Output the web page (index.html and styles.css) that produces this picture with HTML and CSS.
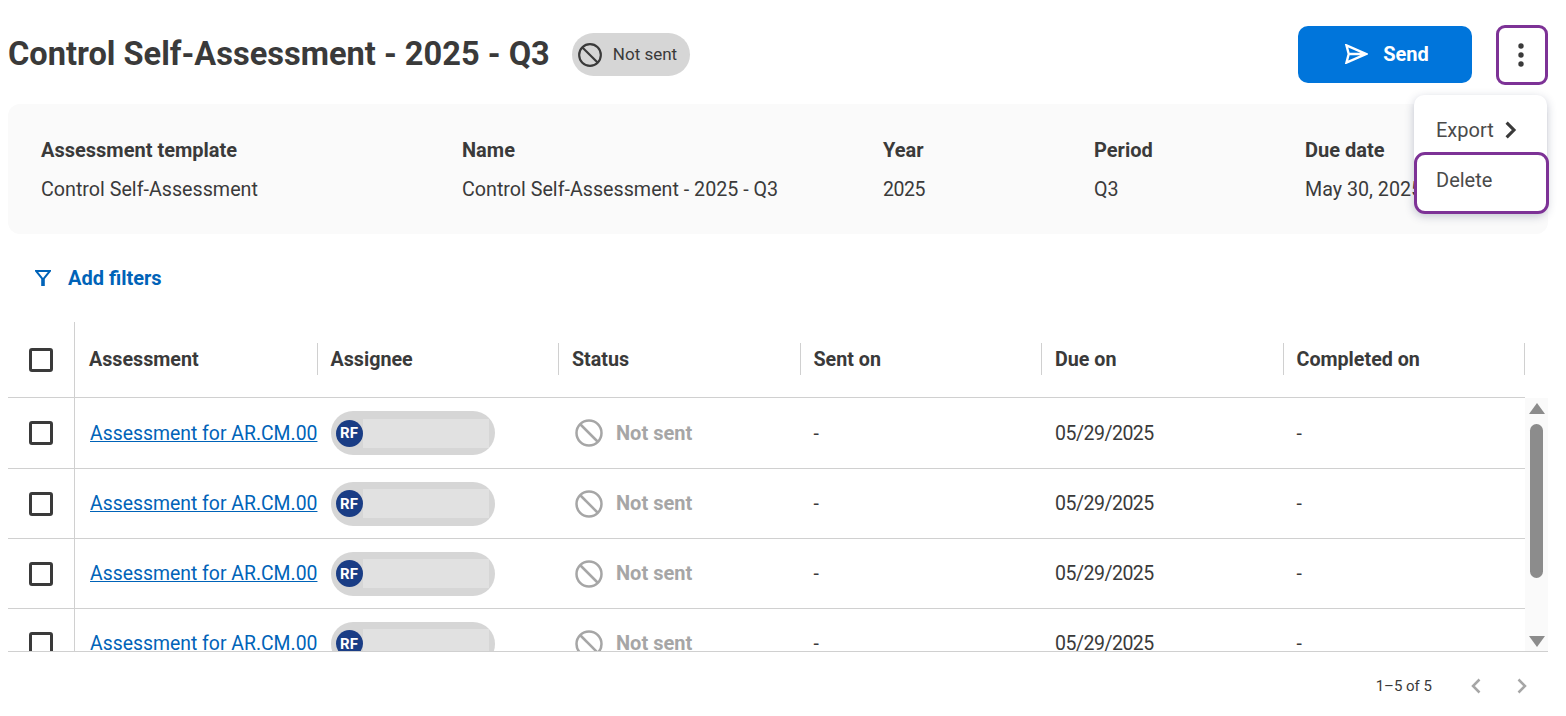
FILE: index.html
```html
<!DOCTYPE html>
<html lang="en">
<head>
<meta charset="utf-8">
<title>Control Self-Assessment - 2025 - Q3</title>
<link rel="stylesheet" href="styles.css">
</head>
<body>
<div class="page">
  <header class="top">
    <h1 class="title">Control Self-Assessment - 2025 - Q3</h1>
    <span class="badge">
      <svg class="ban" viewBox="0 0 24 24"><circle cx="12" cy="12" r="10"/><path d="M5 5l14 14"/></svg>
      <span class="badge-text">Not sent</span>
    </span>
    <div class="actions">
      <button class="send">
        <svg class="plane" viewBox="0 0 26 22"><path d="M2.500 1.500L24 11 2.500 20.500 5 11zM5 11H24"/></svg>
        <span>Send</span>
      </button>
      <button class="more" aria-label="More">
        <svg viewBox="0 0 6 24" class="dots"><circle cx="3" cy="3" r="2.700"/><circle cx="3" cy="12" r="2.700"/><circle cx="3" cy="21" r="2.700"/></svg>
      </button>
      <div class="menu">
        <div class="menu-item export">Export
          <svg class="chev" viewBox="0 0 11 16"><path d="M2.500 1.500L9 8l-6.500 6.500"/></svg>
        </div>
        <div class="menu-item delete">Delete</div>
      </div>
    </div>
  </header>

  <section class="info">
    <div class="info-col"><strong>Assessment template</strong><span>Control Self-Assessment</span></div>
    <div class="info-col"><strong>Name</strong><span>Control Self-Assessment - 2025 - Q3</span></div>
    <div class="info-col"><strong>Year</strong><span class="num">2025</span></div>
    <div class="info-col"><strong>Period</strong><span>Q3</span></div>
    <div class="info-col"><strong>Due date</strong><span>May 30, 2025</span></div>
  </section>

  <div class="filters">
    <svg class="funnel" viewBox="0 0 16 16"><path d="M1 1H15L8.800 8.500V15H7.200V8.500Z"/></svg>
    <span>Add filters</span>
  </div>

  <div class="table">
    <div class="row head">
      <div class="cell check"><i class="box"></i></div>
      <div class="cell th">Assessment</div>
      <div class="cell th">Assignee</div>
      <div class="cell th">Status</div>
      <div class="cell th">Sent on</div>
      <div class="cell th">Due on</div>
      <div class="cell th">Completed on</div>
    </div>
    <div class="body">
      <div class="rows">
        <div class="row">
          <div class="cell check"><i class="box"></i></div>
          <div class="cell"><a href="#">Assessment for AR.CM.00</a></div>
          <div class="cell"><span class="pill"><span class="avatar">RF</span><span class="redact"></span></span></div>
          <div class="cell status"><svg class="ban" viewBox="0 0 24 24"><circle cx="12" cy="12" r="10"/><path d="M5 5l14 14"/></svg><b>Not sent</b></div>
          <div class="cell">-</div>
          <div class="cell num">05/29/2025</div>
          <div class="cell">-</div>
        </div>
        <div class="row">
          <div class="cell check"><i class="box"></i></div>
          <div class="cell"><a href="#">Assessment for AR.CM.00</a></div>
          <div class="cell"><span class="pill"><span class="avatar">RF</span><span class="redact"></span></span></div>
          <div class="cell status"><svg class="ban" viewBox="0 0 24 24"><circle cx="12" cy="12" r="10"/><path d="M5 5l14 14"/></svg><b>Not sent</b></div>
          <div class="cell">-</div>
          <div class="cell num">05/29/2025</div>
          <div class="cell">-</div>
        </div>
        <div class="row">
          <div class="cell check"><i class="box"></i></div>
          <div class="cell"><a href="#">Assessment for AR.CM.00</a></div>
          <div class="cell"><span class="pill"><span class="avatar">RF</span><span class="redact"></span></span></div>
          <div class="cell status"><svg class="ban" viewBox="0 0 24 24"><circle cx="12" cy="12" r="10"/><path d="M5 5l14 14"/></svg><b>Not sent</b></div>
          <div class="cell">-</div>
          <div class="cell num">05/29/2025</div>
          <div class="cell">-</div>
        </div>
        <div class="row">
          <div class="cell check"><i class="box"></i></div>
          <div class="cell"><a href="#">Assessment for AR.CM.00</a></div>
          <div class="cell"><span class="pill"><span class="avatar">RF</span><span class="redact"></span></span></div>
          <div class="cell status"><svg class="ban" viewBox="0 0 24 24"><circle cx="12" cy="12" r="10"/><path d="M5 5l14 14"/></svg><b>Not sent</b></div>
          <div class="cell">-</div>
          <div class="cell num">05/29/2025</div>
          <div class="cell">-</div>
        </div>
      </div>
      <div class="rail">
        <i class="arrow up"></i>
        <i class="thumb"></i>
        <i class="arrow down"></i>
      </div>
    </div>
  </div>

  <footer class="pager">
    <span>1–5 of 5</span>
    <svg class="page-chev" viewBox="0 0 12 18"><path d="M9.500 2.500L3 9l6.500 6.500"/></svg>
    <svg class="page-chev" viewBox="0 0 12 18"><path d="M2.500 2.500L9 9l-6.500 6.500"/></svg>
  </footer>
</div>
</body>
</html>
```
FILE: styles.css
```css
* { box-sizing: border-box; }
html, body { margin: 0; height: 100%; background: #fff; overflow: hidden; }
body { font-family: Roboto, "Liberation Sans", sans-serif; color: #3a3a3a; font-size: 19.400px; }
.page { width: 1566px; height: 716px; padding: 0 18px 0 8px; }

.top { display: flex; align-items: center; height: 104px; padding-top: 5px; }
.title { margin: -1px 0 0; font-size: 32.600px; line-height: 40px; font-weight: 700; white-space: nowrap; }
.badge { display: inline-flex; align-items: center; gap: 10px; height: 43px; margin-left: 22px; padding: 0 13px 0 5px; border-radius: 22px; background: #d6d6d6; font-size: 17px; }
.badge .ban { width: 26px; height: 26px; }
.badge-text { padding-bottom: 2px; }
.ban { fill: none; stroke: #3a3a3a; stroke-width: 2; flex: none; }
.actions { position: relative; display: flex; align-items: center; gap: 24px; margin-left: auto; }
.send { display: flex; align-items: center; justify-content: center; gap: 15px; width: 174px; height: 57px; padding: 0 0 1px 3px; border: 0; border-radius: 10px; background: #0075db; color: #fff; font: 700 20px Roboto, sans-serif; }
.plane { width: 24px; height: 20px; fill: none; stroke: #fff; stroke-width: 2.600; stroke-linejoin: miter; }
.more { display: flex; align-items: center; justify-content: center; width: 52px; height: 60px; padding: 0 3px 0 0; border: 3px solid #7d3296; border-radius: 9px; background: #fff; }
.dots { width: 6px; height: 24px; fill: #3a3a3a; }
.menu { position: absolute; z-index: 2; top: 70px; right: 1px; width: 133px; height: 118px; border-radius: 10px; background: #fff; box-shadow: 0 3px 10px rgba(40, 50, 90, .28); color: #4a4a4a; }
.menu-item { display: flex; align-items: center; gap: 9px; padding-left: 22px; font-size: 20px; }
.export { height: 57px; padding-top: 14px; }
.delete { height: 62px; margin-right: -2px; border: 3px solid #7d3296; border-radius: 11px; padding-left: 19px; padding-bottom: 6px; background: #fff; }
.chev { width: 14px; height: 18px; fill: none; stroke: #3a3a3a; stroke-width: 2.800; }

.info { display: grid; grid-template-columns: 421px 421px 211px 211px 1fr; height: 130px; padding: 35px 0 0 33px; border-radius: 12px; background: #fafafa; }
.info-col { display: flex; flex-direction: column; gap: 15px; line-height: 24px; font-size: 19.700px; white-space: nowrap; }
.info-col strong { margin-top: -1px; margin-bottom: 1px; font-weight: 700; font-size: 20px; }
.num, .info-col .num { font-size: 19.500px; letter-spacing: -0.5px; }

.filters { display: flex; align-items: center; gap: 17px; height: 88px; padding-left: 27px; color: #0063b8; font-weight: 700; font-size: 20px; }
.funnel { width: 16px; height: 16px; fill: none; stroke: #0063b8; stroke-width: 2; }

.table { display: flex; flex-direction: column; height: 330px; border-bottom: 1px solid #d0d0d0; overflow: hidden; }
.row { display: grid; grid-template-columns: 67px repeat(6, 241.500px); align-items: center; height: 70px; border-bottom: 1px solid #d0d0d0; }
.rows .row:first-child { height: 71px; }
.row.head { height: 76px; align-items: stretch; width: 1517px; }
.cell { display: flex; align-items: center; height: 100%; padding-left: 14px; white-space: nowrap; }
.check { justify-content: center; padding: 0; border-right: 1px solid #d0d0d0; }
.th { position: relative; font-weight: 700; font-size: 19.700px; }
.th::after { content: ""; position: absolute; top: 21px; right: -1px; width: 1px; height: 32px; background: #d0d0d0; }
.box { display: block; width: 24px; height: 24px; border: 3px solid #3a3a3a; border-radius: 3px; background: #fff; }

.body { display: flex; flex: 1; min-height: 0; }
.rows { width: 1517px; flex: none; }
a { margin-left: 1px; color: #0063b8; }
.pill { display: flex; align-items: center; width: 164px; height: 44px; padding-left: 5px; border-radius: 22px; background: #d6d6d6; }
.avatar { display: flex; align-items: center; justify-content: center; flex: none; width: 27px; height: 27px; border-radius: 50%; background: #1a3d85; color: #fff; font-size: 15px; font-weight: 700; }
.redact { width: 126px; height: 29px; background: #e1e1e1; }
.status { gap: 12px; padding-left: 16px; color: #a6a6a6; }
.status .ban { width: 30px; height: 30px; stroke: #a6a6a6; stroke-width: 2; }
.status b { margin-top: -1px; font-weight: 700; font-size: 20px; }

.rail { position: relative; width: 23px; flex: none; background: #fafafa; }
.thumb { position: absolute; top: 26px; left: 5px; width: 13px; height: 154px; border-radius: 7px; background: #8c8c8c; }
.arrow { position: absolute; left: 4px; width: 0; height: 0; border-left: 8px solid transparent; border-right: 8px solid transparent; }
.arrow.up { top: 5px; border-bottom: 11px solid #8c8c8c; }
.arrow.down { bottom: 4px; border-top: 11px solid #8c8c8c; }

.pager { display: flex; align-items: center; justify-content: flex-end; height: 68px; padding-right: 20px; font-size: 15px; color: #3a3a3a; }
.page-chev { width: 12px; height: 18px; margin-left: 34px; fill: none; stroke: #a6a6a6; stroke-width: 2.500; }
.pager span { margin-right: 4px; }
```
